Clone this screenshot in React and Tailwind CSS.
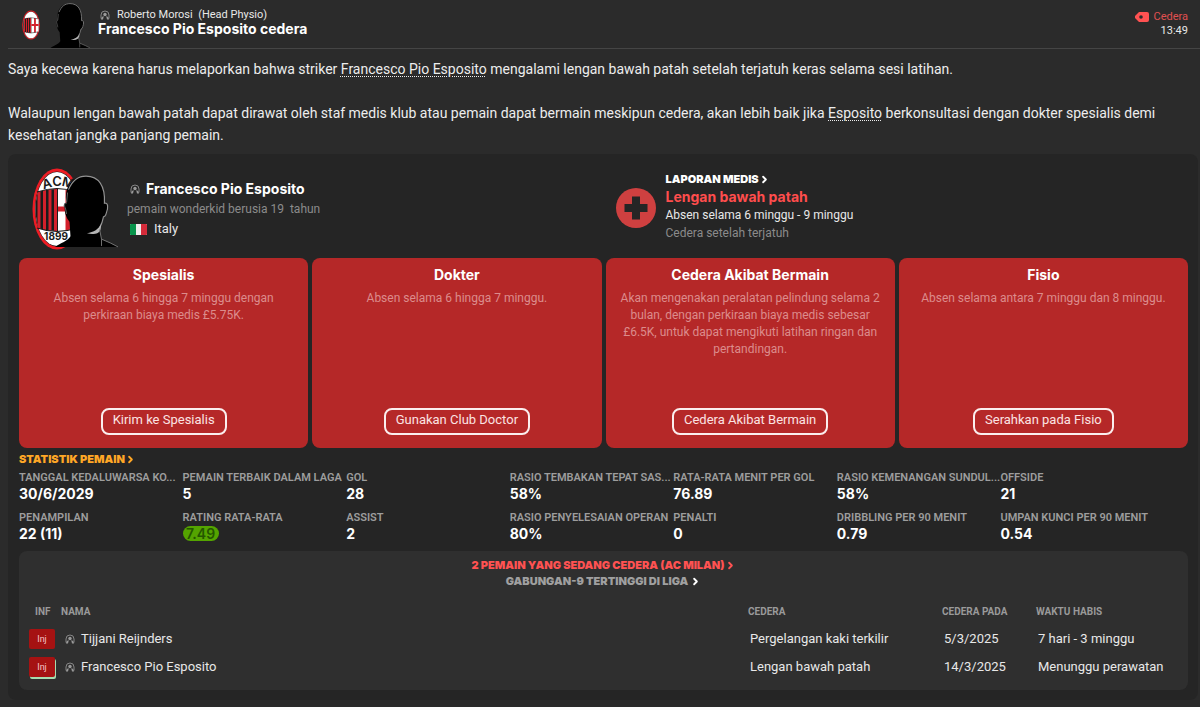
import { ChevronRight } from "lucide-react";

const treatments = [
  {
    title: "Spesialis",
    text: "Absen selama 6 hingga 7 minggu dengan perkiraan biaya medis £5.75K.",
    action: "Kirim ke Spesialis"
  },
  {
    title: "Dokter",
    text: "Absen selama 6 hingga 7 minggu.",
    action: "Gunakan Club Doctor"
  },
  {
    title: "Cedera Akibat Bermain",
    text: "Akan mengenakan peralatan pelindung selama 2 bulan, dengan perkiraan biaya medis sebesar £6.5K, untuk dapat mengikuti latihan ringan dan pertandingan.",
    action: "Cedera Akibat Bermain"
  },
  {
    title: "Fisio",
    text: "Absen selama antara 7 minggu dan 8 minggu.",
    action: "Serahkan pada Fisio"
  }
];

const stats = [
  { label: "TANGGAL KEDALUWARSA KO...", value: "30/6/2029" },
  { label: "PEMAIN TERBAIK DALAM LAGA", value: "5" },
  { label: "GOL", value: "28" },
  { label: "RASIO TEMBAKAN TEPAT SAS...", value: "58%" },
  { label: "RATA-RATA MENIT PER GOL", value: "76.89" },
  { label: "RASIO KEMENANGAN SUNDUL...", value: "58%" },
  { label: "OFFSIDE", value: "21" },
  { label: "PENAMPILAN", value: "22 (11)" },
  { label: "RATING RATA-RATA", value: "7.49", rating: true },
  { label: "ASSIST", value: "2" },
  { label: "RASIO PENYELESAIAN OPERAN", value: "80%" },
  { label: "PENALTI", value: "0" },
  { label: "DRIBBLING PER 90 MENIT", value: "0.79" },
  { label: "UMPAN KUNCI PER 90 MENIT", value: "0.54" }
];

const injuries = [
  { name: "Tijjani Reijnders", injury: "Pergelangan kaki terkilir", date: "5/3/2025", due: "7 hari - 3 minggu" },
  { name: "Francesco Pio Esposito", injury: "Lengan bawah patah", date: "14/3/2025", due: "Menunggu perawatan", current: true }
];

function Crest({ className, lettered }) {
  return (
    <svg viewBox="0 0 50 82" className={className} aria-hidden="true">
      <ellipse cx="25" cy="41" rx="24.5" ry="40.5" fill="#ed1c24" />
      <ellipse cx="25" cy="41" rx="22" ry="37.5" fill="#1b1b1b" />
      <ellipse cx="25" cy="41" rx="21.5" ry="37" fill="#fff" />
      <clipPath id="crest-middle">
        <path d="M3 25Q25 17 47 25Q50 41 47 59Q25 67 3 59Q0 41 3 25Z" />
      </clipPath>
      <g clipPath="url(#crest-middle)">
        <ellipse cx="25" cy="41" rx="21.5" ry="37" fill="#1b1b1b" />
        <path d="M7 10V72M12.500 10V72M18 10V72M23.500 10V72" stroke="#d3202b" strokeWidth="3" />
        <path d="M26 10H46V72H26Z" fill="#fff" />
        <path d="M26 41H46M36 10V72" stroke="#d3202b" strokeWidth="5" />
      </g>
      <path d="M5 24Q25 17 45 24M5 60Q25 67 45 60" fill="none" stroke="#1b1b1b" strokeWidth="1.200" />
      {lettered && (
        <g fontFamily="Inter, sans-serif" fill="#1b1b1b" textAnchor="middle">
          <g fontSize="13" fontWeight="600">
            <text transform="translate(16 20) rotate(-16)">A</text>
            <text x="25" y="18">C</text>
            <text transform="translate(35 19) rotate(14)">M</text>
          </g>
          <text x="24" y="72" fontSize="10" fontWeight="700">1899</text>
        </g>
      )}
    </svg>
  );
}

function Silhouette({ className }) {
  return (
    <svg viewBox="0 0 68 74" className={className} aria-hidden="true">
      <path d="M2 74C8 70 15 68 18 63L17 48C14 45 12 39 12 34C10 31 12 28 14 29C11 12 20 1 33 1C47 1 55 11 53 29C57 28 57 33 56 38C55 41 54 43 52 43C51 49 49 53 48 57L50 66C56 69 62 71 67 74Z" fill="#000" />
      <path d="M16 15C20 5 26 1 34 1C47 1 54 11 53 29C57 28 57 34 55 39Q54 43 52 43Q51 49 48 54" fill="none" stroke="#929292" strokeWidth="1.200" />
      <path d="M14 29C12 28 11 31 13 35L14 40M14 28L15 18" fill="none" stroke="#666" strokeWidth="1" />
      <path d="M50 50C47 56 42 59 35 60C42 62 48 60 49 56Z" fill="#b5b5b5" />
      <path d="M48 56L50 66L50 73M50 66Q60 70 67 74" fill="none" stroke="#757575" strokeWidth="1" />
    </svg>
  );
}

function PersonIcon({ className }) {
  return (
    <svg viewBox="0 0 10 10" className={className} aria-hidden="true">
      <path d="M1 8.500V5A4 4 0 0 1 9 5V8.500" fill="none" stroke="#858585" strokeWidth="1" />
      <circle cx="5" cy="4.500" r="1.700" fill="#999" />
      <path d="M1 9.500C1 7.500 2.200 6.500 3.800 6.200L3 9.500ZM9 9.500C9 7.500 7.800 6.500 6.200 6.200L7 9.500Z" fill="#999" />
    </svg>
  );
}

function TreatmentCard({ title, text, action }) {
  return (
    <article className="flex min-h-[190px] flex-col items-center rounded-lg bg-[#b52828] px-[10px] pt-2 pb-[13px] text-center">
      <h3 className="font-[Inter] text-sm leading-[18px] font-bold text-white">{title}</h3>
      <p className="mt-[6px] text-xs leading-[17px] text-[#dc8c8c]">{text}</p>
      <button type="button" className="mt-auto h-[27px] rounded-lg border-2 border-[#fbeeee] px-[10px] pb-1 text-[13px] leading-5 text-[#fbe3e3]">
        {action}
      </button>
    </article>
  );
}

function Stat({ label, value, rating }) {
  return (
    <div className="h-10 min-w-0 whitespace-nowrap">
      <dt className="pt-px text-[11px] leading-[17px] font-semibold text-[#9d9d9d]">{label}</dt>
      <dd className="font-[Inter] text-sm leading-4 font-bold text-white">
        {rating ? <span className="block w-9 rounded-full bg-[#54a400] text-center leading-[15px] font-semibold text-[#245600]">{value}</span> : value}
      </dd>
    </div>
  );
}

function App() {
  return (
    <main className="min-h-screen bg-[#2b2b2b] pb-[7px] font-[Roboto,sans-serif] text-[#e8e8e8]">
      <header className="ml-2 flex h-[49px] border-b border-[#454545] pr-3">
        <Crest className="mt-[10px] ml-[14px] h-[30px] w-[18px]" />
        <Silhouette className="mt-[3px] ml-[9px] h-[45px] w-[42px]" />
        <div className="ml-[7px] pt-[7px]">
          <p className="flex items-center text-[11px] leading-[15px] whitespace-pre">
            <PersonIcon className="mr-[7px] ml-[2px] size-[10px]" />
            Roberto Morosi  (Head Physio)
          </p>
          <h1 className="font-[Inter] text-sm leading-[14px] font-bold text-white">Francesco Pio Esposito cedera</h1>
        </div>
        <div className="ml-auto pt-[9px] text-right">
          <p className="flex items-center gap-1 text-[11px] leading-[15px] text-[#e05050]">
            <svg viewBox="0 0 14 10" className="h-[10px] w-[14px]" aria-hidden="true">
              <path d="M4 0H12Q14 0 14 2V8Q14 10 12 10H4L0 6V4Z" fill="#ff5252" />
              <circle cx="6" cy="5" r="1.800" fill="#2b2b2b" />
            </svg>
            Cedera
          </p>
          <time className="block text-[11px] leading-[14px]">13:49</time>
        </div>
      </header>

      <div className="mt-[9px] pl-2 text-sm leading-[22px] text-[#ededed]">
        <p>
          Saya kecewa karena harus melaporkan bahwa striker{" "}
          <a href="#esposito" className="underline decoration-dotted decoration-1 underline-offset-2">Francesco Pio Esposito</a>{" "}
          mengalami lengan bawah patah setelah terjatuh keras selama sesi latihan.
        </p>
        <p className="mt-[22px]">
          Walaupun lengan bawah patah dapat dirawat oleh staf medis klub atau pemain dapat bermain meskipun cedera, akan lebih baik jika{" "}
          <a href="#esposito" className="underline decoration-dotted decoration-1 underline-offset-2">Esposito</a>{" "}
          berkonsultasi dengan dokter spesialis demi kesehatan jangka panjang pemain.
        </p>
      </div>

      <section className="mt-2 mr-[2px] ml-2 rounded-lg bg-[#252525] pr-[10px] pb-[10px] pl-[11px]">
        <div className="grid h-[104px] grid-cols-2">
          <div className="flex">
            <div className="mt-[14px] ml-[13px] flex">
              <Crest className="h-[82px] w-[50px]" lettered />
              <Silhouette className="mt-[6px] -ml-[29px] h-[74px] w-[66px]" />
            </div>
            <div className="mt-[25px] ml-2 text-xs leading-5">
              <h2 className="flex items-center gap-[6px] pl-[3px] font-[Inter] text-sm leading-5 font-bold text-white">
                <PersonIcon className="size-[10px]" />
                Francesco Pio Esposito
              </h2>
              <p className="whitespace-pre text-[#8b8b8b]">pemain wonderkid berusia 19  tahun</p>
              <p className="flex items-center gap-[7px] pl-[3px] text-[13px] leading-5">
                <svg viewBox="0 0 17 11" className="h-[11px] w-[17px]" aria-hidden="true">
                  <rect width="17" height="11" rx="1" fill="#eee" />
                  <path d="M1 0H6V11H1Q0 11 0 10V1Q0 0 1 0Z" fill="#07934b" />
                  <path d="M11 0H16Q17 0 17 1V10Q17 11 16 11H11Z" fill="#d52b3a" />
                </svg>
                Italy
              </p>
            </div>
          </div>
          <div className="flex pl-3">
            <svg viewBox="0 0 40 40" className="mt-[34px] size-10" aria-hidden="true">
              <circle cx="20" cy="20" r="20" fill="#cf4040" />
              <path d="M16 8.500H24V16H31.500V24H24V31.500H16V24H8.500V16H16Z" fill="#252525" />
            </svg>
            <div className="mt-4 ml-[10px] text-xs leading-[18px]">
              <a href="#medis" className="flex items-center font-[Inter] text-[11px] leading-[18px] font-black text-white">
                LAPORAN MEDIS<ChevronRight size={11} strokeWidth={4} />
              </a>
              <p className="font-[Inter] text-sm leading-[18px] font-bold text-[#ff4d4d]">Lengan bawah patah</p>
              <p>Absen selama 6 minggu - 9 minggu</p>
              <p className="text-[#8b8b8b]">Cedera setelah terjatuh</p>
            </div>
          </div>
        </div>

        <div className="grid grid-cols-4 gap-1">
          {treatments.map((item) => (
            <TreatmentCard key={item.title} {...item} />
          ))}
        </div>

        <a href="#statistik" className="mt-[2px] flex items-center font-[Inter] text-[11px] leading-[18px] font-black text-[#ffa726]">
          STATISTIK PEMAIN<ChevronRight size={11} strokeWidth={4} />
        </a>
        <dl className="grid grid-cols-7 pr-6">
          {stats.map((item) => (
            <Stat key={item.label} {...item} />
          ))}
        </dl>

        <div className="mt-[3px] rounded-lg bg-[#2f2f2f] px-[10px] pt-[6px] pb-[9px]">
          <div className="flex flex-col items-center font-[Inter] text-[11px] leading-4 font-black">
            <a href="#cedera" className="flex items-center text-[#ff5252]">
              2 PEMAIN YANG SEDANG CEDERA (AC MILAN)<ChevronRight size={11} strokeWidth={4} />
            </a>
            <a href="#liga" className="flex items-center gap-[2px] text-[#a0a0a0]">
              GABUNGAN-9 TERTINGGI DI LIGA<ChevronRight size={11} strokeWidth={4} className="text-white" />
            </a>
          </div>
          <table className="mt-[9px] w-full table-fixed text-left">
            <thead>
              <tr className="h-[27px] text-[10px] font-bold text-[#9a9a9a]">
                <th className="w-8 pl-[6px]">INF</th>
                <th>NAMA</th>
                <th className="w-[194px]">CEDERA</th>
                <th className="w-[94px]">CEDERA PADA</th>
                <th className="w-[142px]">WAKTU HABIS</th>
              </tr>
            </thead>
            <tbody className="text-[13px] leading-[18px]">
              {injuries.map((row) => (
                <tr key={row.name} className="h-7">
                  <td>
                    <span className={`block h-5 w-[26px] rounded-xs bg-[#a51212] text-center text-[9px] leading-5 text-[#f4c6c6] ${row.current ? "shadow-[1px_2px_0_#a6dcae]" : ""}`}>
                      Inj
                    </span>
                  </td>
                  <td>
                    <span className="flex items-center gap-[6px] pl-1">
                      <PersonIcon className="size-[10px]" />
                      {row.name}
                    </span>
                  </td>
                  <td className="pl-[2px]">{row.injury}</td>
                  <td className="pl-[2px]">{row.date}</td>
                  <td className="pl-[2px]">{row.due}</td>
                </tr>
              ))}
            </tbody>
          </table>
        </div>
      </section>
    </main>
  );
}

export default App;
